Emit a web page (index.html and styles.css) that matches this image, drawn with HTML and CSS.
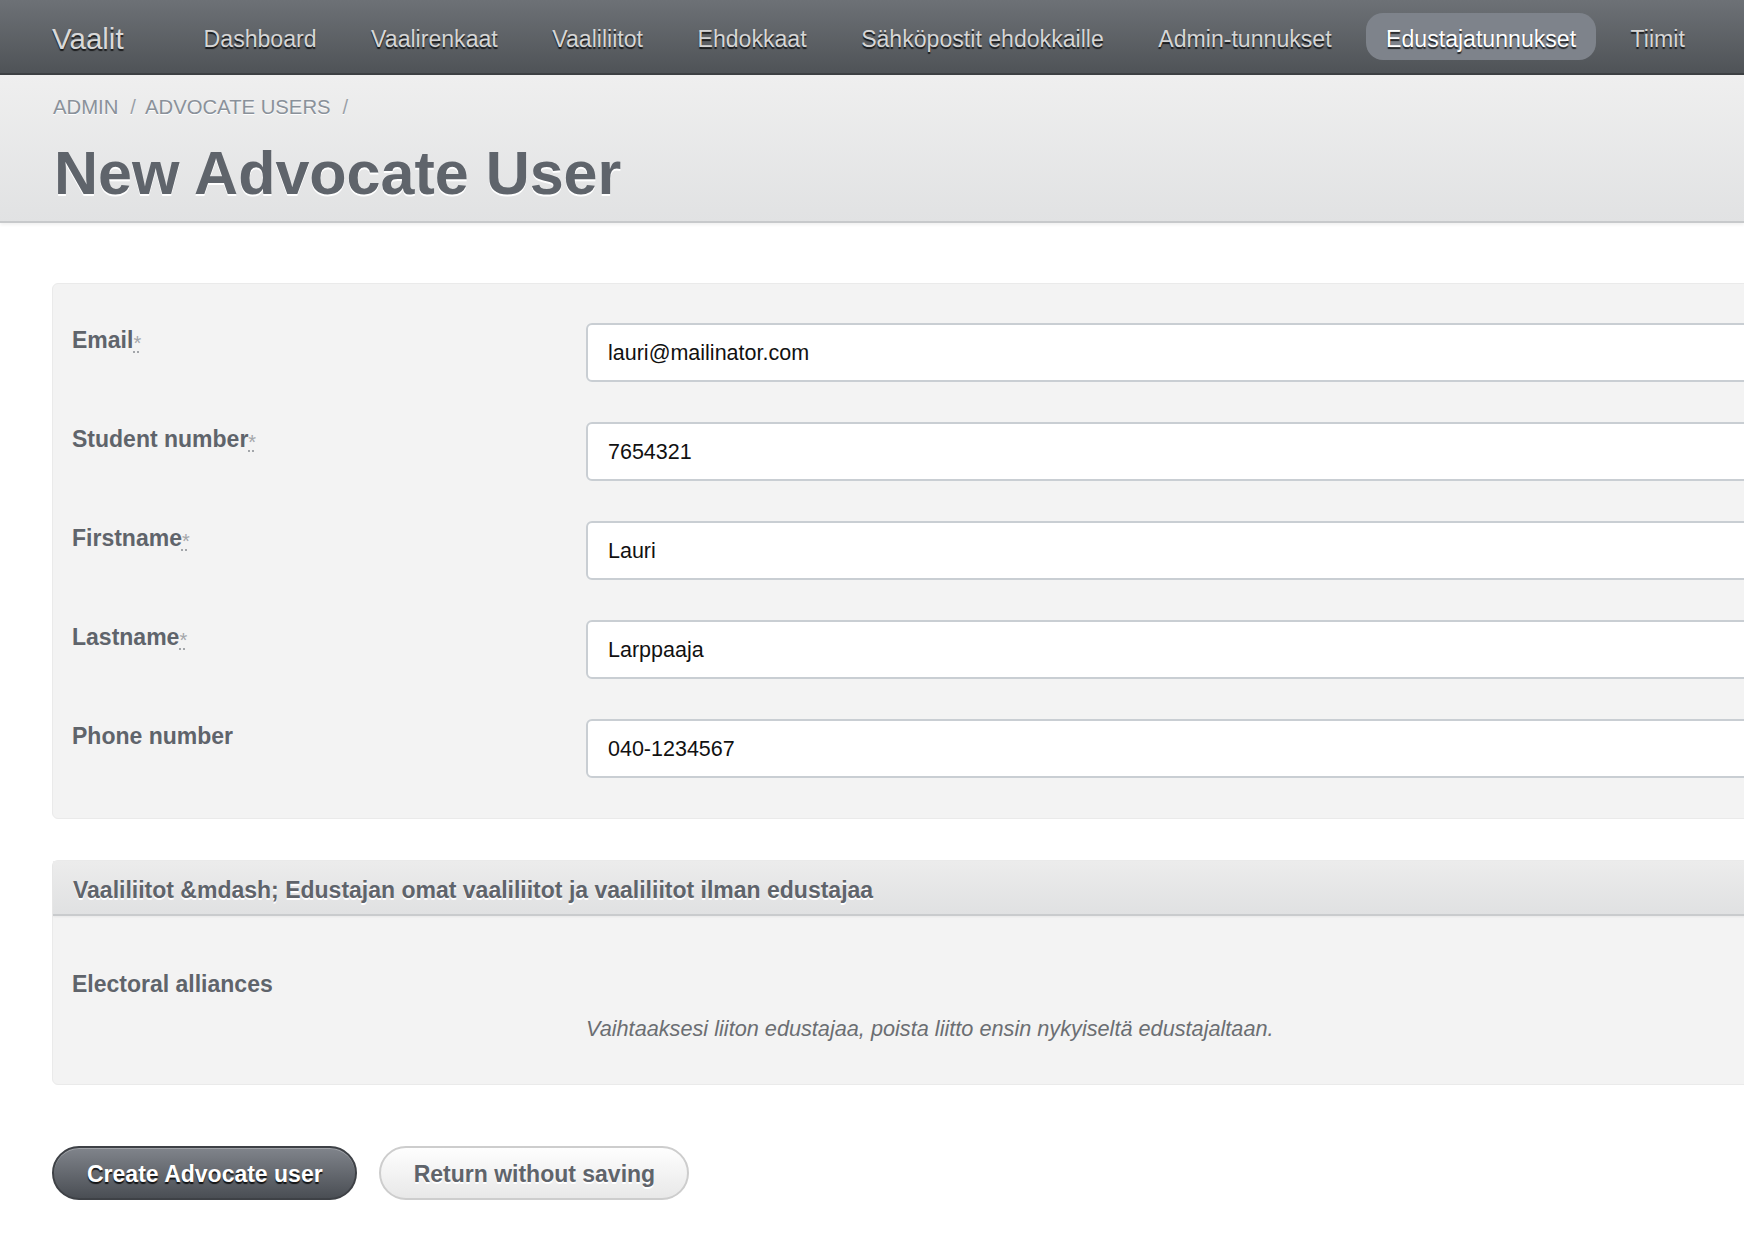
FILE: index.html
```html
<!DOCTYPE html>
<html lang="fi">
<head>
<meta charset="utf-8">
<title>New Advocate User</title>
<link rel="stylesheet" href="styles.css">
</head>
<body>
<nav class="topbar">
  <a class="brand" href="#">Vaalit</a>
  <ul class="menu">
    <li><a href="#">Dashboard</a></li>
    <li><a href="#">Vaalirenkaat</a></li>
    <li><a href="#">Vaaliliitot</a></li>
    <li><a href="#">Ehdokkaat</a></li>
    <li><a href="#">Sähköpostit ehdokkaille</a></li>
    <li><a href="#">Admin-tunnukset</a></li>
    <li class="active"><a href="#">Edustajatunnukset</a></li>
    <li><a href="#">Tiimit</a></li>
  </ul>
</nav>
<header class="page-header">
  <div class="crumbs"><a href="#">ADMIN</a><span class="sep">/</span><a href="#">ADVOCATE USERS</a><span class="sep">/</span></div>
  <h1 class="title">New Advocate User</h1>
</header>
<main class="content">
  <form class="form">
    <div class="panel fields">
      <label class="label">Email<abbr class="req" title="required">*</abbr></label>
      <input class="input" type="text" value="lauri@mailinator.com">
      <label class="label">Student number<abbr class="req" title="required">*</abbr></label>
      <input class="input" type="text" value="7654321">
      <label class="label">Firstname<abbr class="req" title="required">*</abbr></label>
      <input class="input" type="text" value="Lauri">
      <label class="label">Lastname<abbr class="req" title="required">*</abbr></label>
      <input class="input" type="text" value="Larppaaja">
      <label class="label">Phone number</label>
      <input class="input" type="text" value="040-1234567">
    </div>
    <div class="panel alliances">
      <div class="panel-head">Vaaliliitot &amp;mdash; Edustajan omat vaaliliitot ja vaaliliitot ilman edustajaa</div>
      <div class="panel-body">
        <div class="label">Electoral alliances</div>
        <p class="hint">Vaihtaaksesi liiton edustajaa, poista liitto ensin nykyiseltä edustajaltaan.</p>
      </div>
    </div>
    <div class="actions">
      <button class="btn btn-primary" type="button">Create Advocate user</button>
      <button class="btn btn-secondary" type="button">Return without saving</button>
    </div>
  </form>
</main>
</body>
</html>
```
FILE: styles.css
```css
html, body {
  margin: 0;
  padding: 0;
  overflow-x: hidden;
  background: #ffffff;
  font-family: "Liberation Sans", Arial, Helvetica, sans-serif;
  color: #5f646b;
}

a { text-decoration: none; color: inherit; }

/* ---------- top bar ---------- */
.topbar {
  display: flex;
  align-items: center;
  height: 73px;
  background: linear-gradient(#6d7176, #4f5357);
  border-bottom: 2px solid #3d4043;
}
.brand {
  margin-left: 52px;
  font-size: 29.5px;
  color: #d9d9d9;
  padding-top: 5px;
  text-shadow: 0 2px 1px rgba(0, 0, 0, 0.7);
}
.menu {
  display: flex;
  gap: 14.5px;
  list-style: none;
  margin: 0 0 0 60px;
  padding: 0;
}
.menu li a {
  display: block;
  white-space: nowrap;
  font-size: 23.1px;
  line-height: 27px;
  padding: 13px 20px 7px;
  border-radius: 17px;
  color: #d6d6d6;
  text-shadow: 0 2px 1px rgba(0, 0, 0, 0.75);
}
.menu li.active a {
  background: #7e838b;
  color: #ffffff;
}

/* ---------- page header ---------- */
.page-header {
  background: linear-gradient(#efefef, #e1e2e3);
  border-bottom: 2px solid #c7c9cb;
  box-shadow: 0 2px 3px rgba(0, 0, 0, 0.06);
  padding: 20px 52px 15px 53px;
}
.crumbs {
  font-size: 20.3px;
  line-height: 24px;
  color: #8a919a;
  text-shadow: 0 1px 0 #ffffff;
}
.crumbs .sep {
  display: inline-block;
  margin: 0 9px 0 12px;
  color: #9aa0a7;
}
.title {
  margin: 21px 0 0 1px;
  font-size: 61px;
  line-height: 66px;
  font-weight: bold;
  color: #5f646b;
  text-shadow: 0 2px 0 #ffffff;
}

/* ---------- content ---------- */
.content {
  width: 1900px;
  padding: 60px 0 40px 52px;
}
.panel {
  box-sizing: border-box;
  background: #f3f3f3;
  border: 1px solid #eaeaea;
  border-radius: 6px;
}
.fields {
  display: grid;
  grid-template-columns: 514px 1fr;
  align-items: start;
  row-gap: 40px;
  padding: 39px 0 40px 19px;
}
.label {
  display: block;
  margin-top: 4px;
  font-size: 23px;
  line-height: 26px;
  font-weight: bold;
  color: #5f646b;
}
.req {
  font-size: 20px;
  line-height: 20px;
  font-weight: normal;
  color: #a3a6aa;
  vertical-align: -2px;
  text-decoration: underline dotted #a3a6aa;
  cursor: help;
}
.input {
  box-sizing: border-box;
  width: 100%;
  height: 59px;
  margin: 0;
  padding: 2px 20px 0;
  font-family: "Liberation Sans", Arial, Helvetica, sans-serif;
  font-size: 21.5px;
  color: #111111;
  background: #ffffff;
  border: 2px solid #c9ced3;
  border-radius: 6px;
  outline: none;
}

.alliances {
  margin-top: 41px;
}
.panel-head {
  box-sizing: border-box;
  height: 55px;
  padding: 16px 0 0 20px;
  line-height: 27px;
  font-size: 23px;
  font-weight: bold;
  color: #5f646b;
  text-shadow: 0 2px 0 #ffffff;
  background: linear-gradient(#ececec, #e0e1e2);
  border-bottom: 2px solid #c9cbcd;
  box-shadow: 0 1px 2px rgba(0, 0, 0, 0.05);
}
.panel-body {
  display: grid;
  grid-template-columns: 514px 1fr;
  row-gap: 19px;
  padding: 55px 0 43px 19px;
}
.panel-body .label {
  grid-column: 1;
  grid-row: 1;
  margin-top: 0;
}
.hint {
  grid-column: 2;
  grid-row: 2;
  margin: 0;
  font-size: 21.7px;
  line-height: 25px;
  font-style: italic;
  color: #6b6e72;
}

/* ---------- buttons ---------- */
.actions {
  display: flex;
  gap: 22px;
  margin-top: 61px;
}
.btn {
  height: 54px;
  padding: 2px 32px 0 33px;
  border-radius: 27px;
  font-family: "Liberation Sans", Arial, Helvetica, sans-serif;
  font-size: 23px;
  font-weight: bold;
  cursor: pointer;
}
.btn-primary {
  color: #ffffff;
  background: linear-gradient(#80848b, #4a4e54);
  border: 2px solid #3e4146;
  box-shadow: inset 0 1px 0 rgba(255, 255, 255, 0.25);
  text-shadow: 0 2px 1px rgba(0, 0, 0, 0.8);
}
.btn-secondary {
  color: #5f646b;
  background: linear-gradient(#fefefe, #e8e8e8);
  border: 2px solid #cdcdcd;
  text-shadow: 0 2px 0 #ffffff;
}
```
